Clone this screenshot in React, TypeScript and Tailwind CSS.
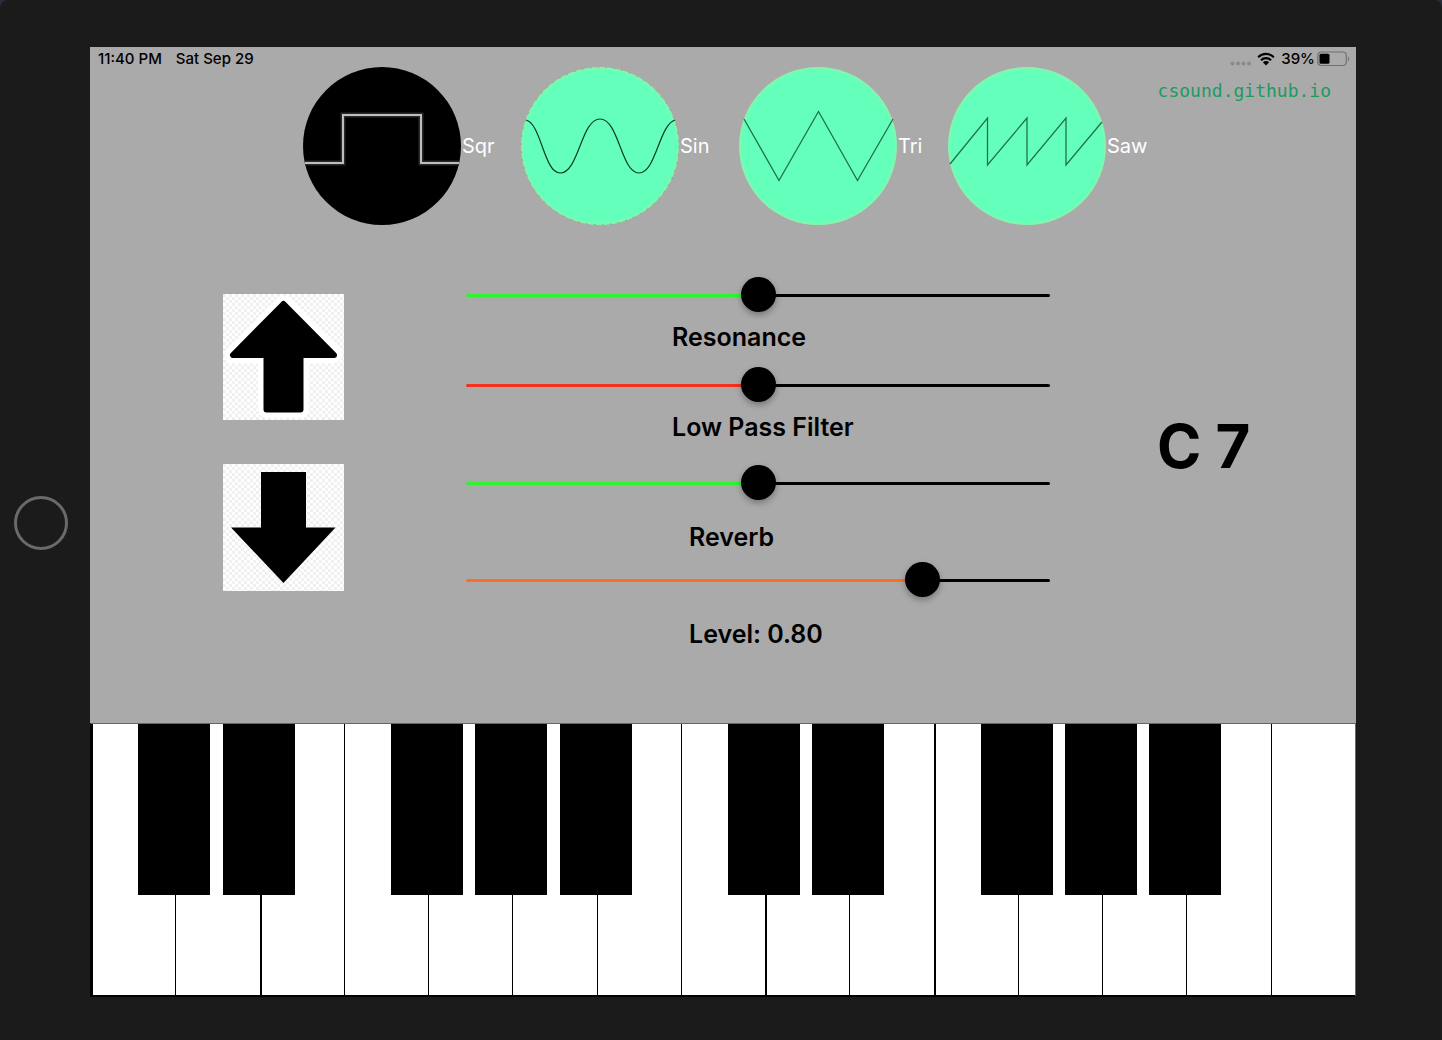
import { useState } from "react";
import type { CSSProperties, ReactNode } from "react";

const NOTES = ["C", "D", "E", "F", "G", "A", "B"];
const SHARPS = [true, true, false, true, true, true, false];
const WHITE_KEYS = Array.from({ length: 15 }, (_, i) => ({
  note: NOTES[i % 7],
  sharp: i < 14 && SHARPS[i % 7],
  wide: i === 0 || i === 2 || i === 8 || i === 10,
}));

const WAVES: { name: string; width: string; drawing: ReactNode }[] = [
  {
    name: "Sqr",
    width: "w-[190px]",
    drawing: (
      <>
        <circle cx="79" cy="79" r="79" fill="#000" />
        <path d="M2 96H40V48H118V96H156" fill="none" stroke="#2a2a2a" strokeWidth="5" />
        <path d="M2 96H40V48H118V96H156" fill="none" stroke="#bdbdbd" strokeWidth="2" />
      </>
    ),
  },
  {
    name: "Sin",
    width: "w-[190px]",
    drawing: (
      <>
        <circle cx="79" cy="79" r="78" fill="#65ffbc" stroke="#85f5ad" strokeWidth="2" />
        <circle cx="79" cy="79" r="78.8" fill="none" stroke="#4d7a62" strokeWidth="0.4" strokeDasharray="2 6" />
        <path
          d="M5 53C20 56 23 106 39 106C58 106 60 52 79 52C98 52 100 106 118 106C135 106 138 58 154 53"
          fill="none"
          stroke="#0c3b2a"
          strokeWidth="1.2"
        />
      </>
    ),
  },
  {
    name: "Tri",
    width: "w-[181px]",
    drawing: (
      <>
        <circle cx="79" cy="79" r="78" fill="#65ffbc" stroke="#85f5ad" strokeWidth="2" />
        <path d="M5 52L40 113.500L79.500 44.500L118.500 113.500L154 52" fill="none" stroke="#20704f" strokeWidth="1.300" />
      </>
    ),
  },
  {
    name: "Saw",
    width: "w-[198px]",
    drawing: (
      <>
        <circle cx="79" cy="79" r="78" fill="#65ffbc" stroke="#85f5ad" strokeWidth="2" />
        <path d="M2 97L39.500 51V98L79 51V98L118 51V98L154 55" fill="none" stroke="#20704f" strokeWidth="1.300" />
      </>
    ),
  },
];

const TRACK =
  "h-[35px] w-full cursor-pointer appearance-none bg-transparent [&::-webkit-slider-runnable-track]:h-[3px] [&::-webkit-slider-runnable-track]:rounded-full [&::-webkit-slider-thumb]:-mt-[17px] [&::-webkit-slider-thumb]:size-[35px] [&::-webkit-slider-thumb]:appearance-none [&::-webkit-slider-thumb]:rounded-full [&::-webkit-slider-thumb]:bg-black [&::-webkit-slider-thumb]:shadow-[0_3px_6px_rgba(0,0,0,0.3)]";
const GREEN =
  "[&::-webkit-slider-runnable-track]:bg-[linear-gradient(to_right,#2cf530_var(--fill),#000_var(--fill))]";
const RED =
  "[&::-webkit-slider-runnable-track]:bg-[linear-gradient(to_right,#f5301c_var(--fill),#000_var(--fill))]";
const ORANGE =
  "[&::-webkit-slider-runnable-track]:bg-[linear-gradient(to_right,#fa6f22_var(--fill),#000_var(--fill))]";

function Slider(props: {
  id: string;
  label: string;
  value: number;
  onChange: (v: number) => void;
  color: string;
  group: string;
  indent: string;
}) {
  return (
    <div className={`flex flex-col ${props.group}`}>
      <input
        id={props.id}
        type="range"
        min={0}
        max={1}
        step={0.01}
        value={props.value}
        onChange={(e) => props.onChange(Number(e.target.value))}
        style={{ "--fill": `${props.value * 100}%` } as CSSProperties}
        className={`${TRACK} ${props.color}`}
      />
      <label htmlFor={props.id} className={`text-[25px] leading-7 font-semibold ${props.indent}`}>
        {props.label}
      </label>
    </div>
  );
}

function StatusBar() {
  return (
    <div className="flex h-5 items-center gap-3.5 pt-1 pr-1.5 pl-2 text-[15px] leading-4 font-medium">
      <span>11:40 PM</span>
      <span>Sat Sep 29</span>
      <div className="ml-auto flex items-center gap-1.5">
        <svg width="22" height="16" viewBox="0 0 22 16" fill="#8a8a8a" aria-hidden="true">
          <circle cx="3.500" cy="12.500" r="2" />
          <circle cx="9" cy="12.500" r="2" />
          <circle cx="14.500" cy="12.500" r="2" />
          <circle cx="20" cy="12.500" r="2" />
        </svg>
        <svg width="18" height="14" viewBox="0 0 18 14" aria-hidden="true">
          <path d="M1.200 5.200a11 11 0 0 1 15.600 0M4 8.200a7 7 0 0 1 10 0" fill="none" stroke="#000" strokeWidth="2.200" />
          <path d="M9 13.400L5.900 10.300a4.400 4.400 0 0 1 6.200 0Z" fill="#000" />
        </svg>
        <span>39%</span>
        <svg width="33" height="16" viewBox="0 0 33 16" className="-ml-1" aria-hidden="true">
          <rect x="0.800" y="1" width="28.500" height="13.500" rx="3.500" fill="none" stroke="#717171" strokeWidth="1.200" />
          <rect x="2.500" y="2.800" width="10" height="10" rx="1.500" fill="#000" />
          <path d="M31 5.500c1.500 0.500 1.500 4.500 0 5Z" fill="#717171" />
        </svg>
      </div>
    </div>
  );
}

function Checker({ id }: { id: string }) {
  return (
    <pattern id={id} width="6" height="6" patternUnits="userSpaceOnUse">
      <rect width="6" height="6" fill="#fff" />
      <path d="M0 0h3v3h-3zM3 3h3v3h-3z" fill="#f0f0f0" />
    </pattern>
  );
}

export default function App() {
  const [wave, setWave] = useState("Sqr");
  const [resonance, setResonance] = useState(0.5);
  const [filter, setFilter] = useState(0.5);
  const [reverb, setReverb] = useState(0.5);
  const [level, setLevel] = useState(0.8);
  const [octave, setOctave] = useState(7);
  const [note, setNote] = useState("C");

  return (
    <div className="min-h-screen bg-[#2b2c3a] font-['Inter',sans-serif] text-black">
      <div className="flex min-h-screen rounded-t-lg bg-[#1b1b1b] pt-[47px] pr-[86px] pb-[43px]">
        <div className="flex w-[90px] shrink-0 items-center pt-0.5 pl-3.5">
          <button aria-label="Home" className="size-[54px] rounded-full border-[3px] border-[#6a6a6a]" />
        </div>
        <main className="flex min-w-0 flex-1 flex-col bg-[#aaa]">
          <StatusBar />
          <div className="flex items-start pr-[25px] pl-[213px]">
            <div className="flex gap-7">
              {WAVES.map((w) => (
                <button
                  key={w.name}
                  aria-pressed={wave === w.name}
                  onClick={() => setWave(w.name)}
                  className={`flex cursor-pointer items-center gap-px text-xl text-white ${w.width}`}
                >
                  <svg width="158" height="158" viewBox="0 0 158 158" className="shrink-0" aria-hidden="true">
                    {w.drawing}
                  </svg>
                  {w.name}
                </button>
              ))}
            </div>
            <a
              href="https://csound.github.io"
              className="mt-3 ml-auto font-['DejaVu_Sans_Mono',monospace] text-lg leading-6 text-[#1c9b60]"
            >
              csound.github.io
            </a>
          </div>

          <div className="flex flex-1 items-start pt-[53px]">
            <div className="mt-4 ml-[133px] flex flex-col gap-11">
              <button aria-label="Octave up" onClick={() => setOctave(octave + 1)} className="cursor-pointer">
                <svg width="121" height="126" viewBox="0 0 121 126">
                  <defs>
                    <Checker id="checker-up" />
                  </defs>
                  <rect width="121" height="126" fill="url(#checker-up)" />
                  <g strokeLinejoin="round">
                    <path d="M60.500 10L10 61H43.500V115.500H77.500V61H111Z" fill="#fff" stroke="#fff" strokeWidth="17" />
                    <path d="M60.500 10L10 61H43.500V115.500H77.500V61H111Z" fill="#000" stroke="#000" strokeWidth="6" />
                  </g>
                </svg>
              </button>
              <button
                aria-label="Octave down"
                onClick={() => setOctave(Math.max(0, octave - 1))}
                className="cursor-pointer"
              >
                <svg width="121" height="127" viewBox="0 0 121 127">
                  <defs>
                    <Checker id="checker-down" />
                  </defs>
                  <rect width="121" height="127" fill="url(#checker-down)" />
                  <path d="M38 8H83V63.500H112.500L60.500 119L8 63.500H38Z" fill="#000" />
                </svg>
              </button>
            </div>

            <div className="ml-[122px] flex max-w-[584px] flex-1 flex-col">
              <Slider
                id="resonance"
                label="Resonance"
                value={resonance}
                onChange={setResonance}
                color={GREEN}
                group="gap-2.5"
                indent="pl-[206px]"
              />
              <Slider
                id="filter"
                label="Low Pass Filter"
                value={filter}
                onChange={setFilter}
                color={RED}
                group="mt-[17px] gap-2.5"
                indent="pl-[206px]"
              />
              <Slider
                id="reverb"
                label="Reverb"
                value={reverb}
                onChange={setReverb}
                color={GREEN}
                group="mt-[25px] gap-[22px]"
                indent="pl-[223px]"
              />
              <Slider
                id="level"
                label={`Level: ${level.toFixed(2)}`}
                value={level}
                onChange={setLevel}
                color={ORANGE}
                group="mt-3 gap-[22px]"
                indent="pl-[223px]"
              />
            </div>

            <output className="mt-[132px] ml-[107px] text-[60px] leading-[72px] font-bold whitespace-nowrap">
              {note} {octave}
            </output>
          </div>

          <div className="flex h-[274px] border-t border-r border-b-2 border-l border-black border-t-[#666] border-r-[#666] bg-white">
            {WHITE_KEYS.map((key, i) => (
              <div key={i} className="relative flex-1">
                <button
                  aria-label={key.note}
                  onClick={() => setNote(key.note)}
                  className={`block h-full w-full border-black bg-white ${key.wide ? "border-l-2" : "border-l"}`}
                />
                {key.sharp && (
                  <button
                    aria-label={`${key.note} sharp`}
                    onClick={() => setNote(`${key.note}♯`)}
                    className="absolute top-0 -right-[35px] z-10 h-[171px] w-[72px] bg-black"
                  />
                )}
              </div>
            ))}
          </div>
        </main>
      </div>
    </div>
  );
}
